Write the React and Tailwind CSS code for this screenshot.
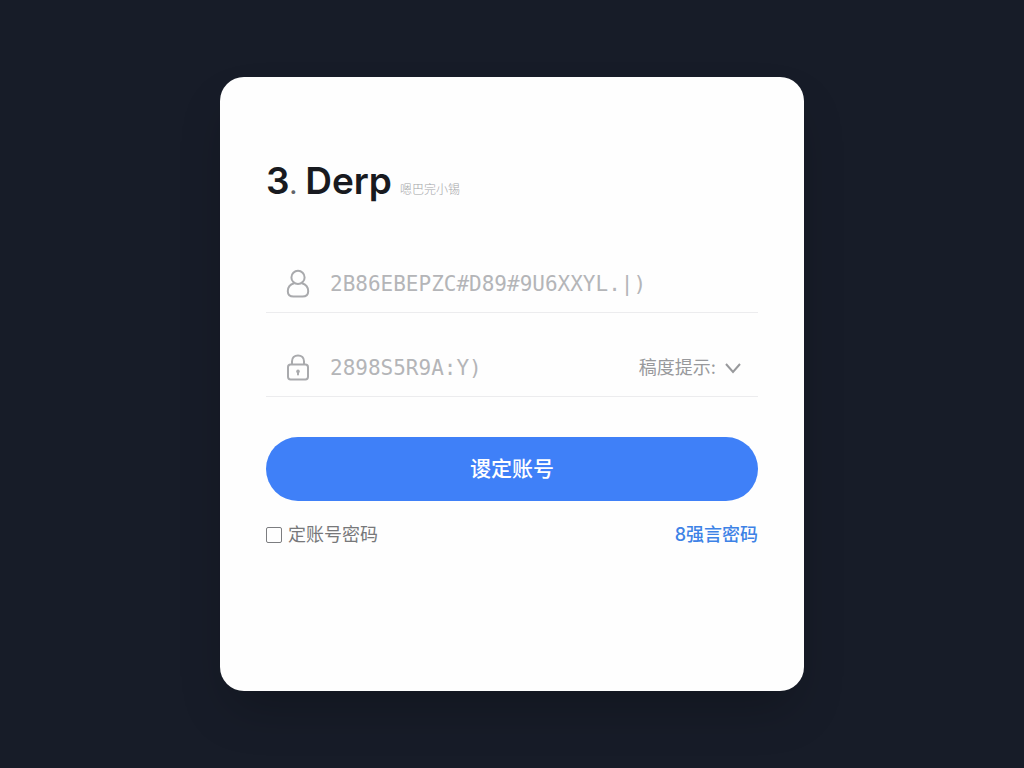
import { useState } from 'react'

function UserIcon() {
  return (
    <svg width="24" height="30" viewBox="0 0 24 30" fill="none" stroke="#a9aaad" strokeWidth="2" aria-hidden="true">
      <circle cx="12" cy="8.4" r="6.6" />
      <path d="M8.2 14.2C4.4 15.2 1.8 18.4 1.8 22.2C1.8 25.8 4 27.6 7.6 27.6H16.4C20 27.6 22.2 25.8 22.2 22.2C22.2 18.4 19.6 15.2 15.8 14.2" />
    </svg>
  )
}

function LockIcon() {
  return (
    <svg width="24" height="30" viewBox="0 0 24 30" fill="none" stroke="#a9aaad" strokeWidth="2" aria-hidden="true">
      <rect x="2" y="11.6" width="20" height="14.8" rx="2.6" />
      <path d="M6 11.6V8.2C6 4.8 8.4 2.4 12 2.4S18 4.8 18 8.2V11.6" />
      <path d="M12 19V21.4" strokeLinecap="round" />
      <circle cx="12" cy="18.4" r="1.8" fill="#a9aaad" stroke="none" />
    </svg>
  )
}

function Field({ id, label, icon, type, placeholder, children }) {
  return (
    <div className="flex h-[60px] items-center border-b border-[#ececee] pt-0.5 pl-5 pr-4">
      <label htmlFor={id} aria-label={label} className="shrink-0">
        {icon}
      </label>
      <input
        id={id}
        type={type}
        aria-label={label}
        placeholder={placeholder}
        className="ml-5 min-w-0 flex-1 bg-transparent font-['DejaVu_Sans_Mono',monospace] text-[21px] leading-7 text-gray-700 outline-none placeholder:text-[#b4b5b8]"
      />
      {children}
    </div>
  )
}

export default function App() {
  const [remember, setRemember] = useState(false)

  return (
    <main className="flex min-h-screen items-center justify-center bg-[#171c28] font-['Inter','Noto_Sans_CJK_SC',sans-serif]">
      <form
        onSubmit={(e) => e.preventDefault()}
        className="w-full max-w-[584px] rounded-3xl bg-[#fefefe] px-[46px] pt-20 pb-[142px] shadow-2xl"
      >
        <h1 className="flex items-baseline text-[37px] leading-[48px] font-semibold text-[#181a20]">
          <span>3</span>
          <span className="text-2xl text-[#63656a]">.</span>
          <span className="ml-2">Derp</span>
          <small className="ml-2 text-xs font-light text-[#a4a5a8]">嗯巴完小锡</small>
        </h1>

        <div className="mt-12 flex flex-col gap-6">
          <Field id="account" label="账号" type="text" icon={<UserIcon />} placeholder="2B86EBEPZC#D89#9U6XXYL.|)" />
          <Field id="password" label="密码" type="password" icon={<LockIcon />} placeholder="2898S5R9A:Y)">
            <button type="button" className="flex items-center gap-2 text-lg text-[#98999c]">
              稿度提示:
              <svg width="18" height="12" viewBox="0 0 18 12" fill="none" stroke="#98999c" strokeWidth="2" aria-hidden="true">
                <path d="M2 2L9 10L16 2" />
              </svg>
            </button>
          </Field>
        </div>

        <button type="submit" className="mt-10 h-16 w-full rounded-full bg-[#3f80f8] text-[21px] font-medium text-white">
          谡定账号
        </button>

        <div className="mt-5 flex items-center justify-between text-lg">
          <label className="flex items-center gap-1.5 text-[#77787a]">
            <input
              type="checkbox"
              checked={remember}
              onChange={(e) => setRemember(e.target.checked)}
              className="h-4 w-4 appearance-none rounded-xs border border-[#7c7d80] checked:bg-[#3f80f8]"
            />
            定账号密码
          </label>
          <a href="#forgot" className="font-medium text-[#3d82e6]">
            8强言密码
          </a>
        </div>
      </form>
    </main>
  )
}
